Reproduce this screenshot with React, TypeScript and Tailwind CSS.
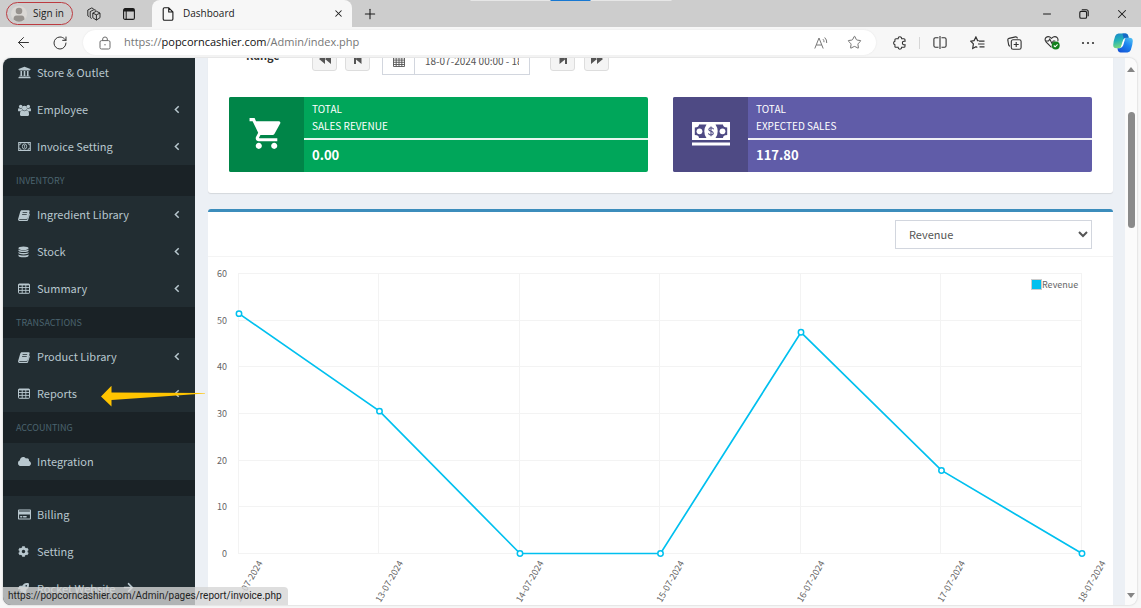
import React, { useState } from "react";
import { FaUniversity, FaCloud, FaRegCreditCard, FaCog, FaRocket, FaArrowRight } from "react-icons/fa";
import { MdShoppingCart } from "react-icons/md";
import { ArrowLeft, RotateCw, Star, X, Plus, Minus } from "lucide-react";

const pageFont = "font-['Noto_Sans_CJK_SC','Noto_Sans',sans-serif]";
const chromeFont = "font-['Open_Sans','Noto_Sans',sans-serif]";

/* ---------- Sidebar glyphs ---------- */

const UsersIcon = () => (
  <svg viewBox="0 0 14 13" className="h-3 w-[13px]" fill="currentColor">
    <circle cx="2.900" cy="2.700" r="1.900" />
    <circle cx="11.100" cy="2.700" r="1.900" />
    <path d="M0 7.600V5.900q0-1.600 1.200-1.300 1.700.8 2.800.1.100 1.200.7 2-1.300.1-2 1.200H1Q0 7.900 0 7.600zM14 7.600V5.900q0-1.600-1.200-1.300-1.700.8-2.800.1-.1 1.200-.7 2 1.300.1 2 1.200H13Q14 7.900 14 7.600z" />
    <circle cx="7" cy="4.500" r="2.700" />
    <path d="M2.100 11.300q0-4.200 2.500-4.400 2.400 1.700 4.800 0 2.500.2 2.500 4.400 0 1.700-1.700 1.700H3.800q-1.700 0-1.700-1.700z" />
  </svg>
);

const MoneyIcon = () => (
  <svg viewBox="0 0 14 10" className="h-[9px] w-[13px]" fill="none" stroke="currentColor">
    <rect x="0.6" y="0.6" width="12.8" height="8.8" strokeWidth="1.2" />
    <ellipse cx="7" cy="5" rx="2.4" ry="2.9" strokeWidth="1" />
    <path d="M6.3 3.9l.8-.4v3" strokeWidth="0.9" />
    <path d="M1 3.2Q3 3 3.2 1M13 3.2Q11 3 10.8 1M1 6.8Q3 7 3.2 9M13 6.8Q11 7 10.8 9" strokeWidth="1" />
  </svg>
);

const BookIcon = () => (
  <svg viewBox="0 0 12 12" className="h-[12px] w-[12px]" fill="currentColor">
    <path fillRule="evenodd" d="M3.9 1.2h6.6c.9 0 1.3.6 1.1 1.4L9.7 9c-.2.6-.7 1-1.4 1H2c-.4 0-.7.1-.8.4 0 .3.3.4.8.4h6.7c.3 0 .6-.2.7-.5l1.8-6.1c.6.3.8.7.6 1.4l-1.7 5.3c-.2.6-.8 1-1.4 1H1.900C.7 12-.1 11 .1 10.100L2.200 2.800C2.500 1.800 3 1.200 3.900 1.200zM4.700 3.300l-.2.7h4.600l.2-.7zM4.200 5.100l-.2.7h4.600l.2-.7z" />
  </svg>
);

const DatabaseIcon = () => (
  <svg viewBox="0 0 12 12" className="h-[12px] w-[11px]" fill="currentColor">
    <ellipse cx="6" cy="1.900" rx="5.500" ry="1.900" />
    <path d="M.5 3.300c1.500 1.400 9.500 1.400 11 0v1.200c0 2-11 2-11 0zM.5 6c1.500 1.400 9.500 1.400 11 0v1.200c0 2-11 2-11 0zM.5 8.700c1.500 1.400 9.500 1.400 11 0v1.400c0 2.300-11 2.300-11 0z" />
  </svg>
);

const TableIcon = () => (
  <svg viewBox="0 0 12 11" className="h-[11px] w-[12px]" fill="none" stroke="currentColor">
    <rect x="0.500" y="1" width="11" height="9.300" rx="0.700" />
    <path d="M.5 1.700h11" strokeWidth="1.400" />
    <path d="M.5 4.500h11M.5 7.400h11M4.200 1.500v8.500M7.800 1.500v8.500" strokeWidth="0.900" />
  </svg>
);

const Caret = () => (
  <svg viewBox="0 0 6 9" className="mt-[2px] ml-auto h-[9px] w-[6px]" fill="none" stroke="currentColor" strokeWidth="1.500">
    <path d="M4.700 1.200L1.400 4.500l3.300 3.300" />
  </svg>
);

type Item = { label: string; icon: React.ReactNode; caret?: boolean; arrow?: boolean };
type Group = { title?: string; items: Item[] };

const groups: Group[] = [
  {
    items: [
      { label: "Store & Outlet", icon: <FaUniversity size={13} /> },
      { label: "Employee", icon: <UsersIcon />, caret: true },
      { label: "Invoice Setting", icon: <MoneyIcon />, caret: true },
    ],
  },
  {
    title: "INVENTORY",
    items: [
      { label: "Ingredient Library", icon: <BookIcon />, caret: true },
      { label: "Stock", icon: <DatabaseIcon />, caret: true },
      { label: "Summary", icon: <TableIcon />, caret: true },
    ],
  },
  {
    title: "TRANSACTIONS",
    items: [
      { label: "Product Library", icon: <BookIcon />, caret: true },
      { label: "Reports", icon: <TableIcon />, caret: true },
    ],
  },
  { title: "ACCOUNTING", items: [{ label: "Integration", icon: <FaCloud size={13} /> }] },
  {
    title: "",
    items: [
      { label: "Billing", icon: <FaRegCreditCard size={13} /> },
      { label: "Setting", icon: <FaCog size={11} /> },
      { label: "Rocket Website", icon: <FaRocket size={11} />, arrow: true },
    ],
  },
];

function Sidebar() {
  return (
    <nav className="relative w-[192px] shrink-0 bg-[#222d32] text-[#b8c7ce]">
      <div className="-mt-1">
        {groups.map((g, i) => (
          <section key={i}>
            {g.title && (
              <h2 className="flex h-[31px] items-center bg-[#1a2226] pl-[13px] text-[9px] text-[#4b646f]">{g.title}</h2>
            )}
            {g.title === "" && <div className="h-4 bg-[#1a2226]" />}
            <ul>
              {g.items.map((it) => (
                <li key={it.label}>
                  <a href="#" className="flex h-[37px] items-center pr-[15px] pb-[2px] pl-[15px] text-[11px] leading-4">
                    <span className="flex w-[19px] items-center pt-[2px]">{it.icon}</span>
                    <span>{it.label}</span>
                    {it.arrow && <FaArrowRight size={11} className="ml-2" />}
                    {it.caret && <Caret />}
                  </a>
                </li>
              ))}
            </ul>
          </section>
        ))}
      </div>
      <svg viewBox="0 0 104 22" className="absolute top-[327px] left-[98px] h-[22px] w-[104px]" fill="#ffc400">
        <path d="M0 11.500L10.500.800v6.700L104 8v.6L10.500 15v6.500z" />
      </svg>
    </nav>
  );
}

/* ---------- Browser frame ---------- */

function TitleBar() {
  return (
    <header className="relative flex h-[27px] shrink-0 items-stretch bg-[#cdcdcd] text-[#1b1b1b]">
      <div className="flex w-[152px] items-center pl-[6px]">
        <button className="flex h-[23px] w-[67px] items-center gap-[6px] rounded-full border border-[#bc3b41] pl-1 text-[10px]">
          <svg viewBox="0 0 16 16" className="h-4 w-4">
            <circle cx="8" cy="8" r="8" fill="#dbd8d5" />
            <circle cx="8" cy="5" r="3.300" fill="#97928e" />
            <path d="M2.500 13.500q0-4 3-4h5q3 0 3 4Q8 18 2.500 13.500z" fill="#97928e" />
          </svg>
          Sign in
        </button>
        <button aria-label="Workspaces" className="ml-[14px]">
          <svg viewBox="0 0 14 14" className="h-[14px] w-[14px]" fill="none" stroke="currentColor" strokeWidth="0.900" strokeLinejoin="round">
            <path d="M9.400 4.200l3.600 1.900v4.600l-3.600 2.400-3.600-2.400V6.100zM5.800 6.100l3.600 1.700L13 6.100M9.400 7.800v5.300" />
            <path d="M4.700 11.500l-1.500-1V4.600L7 2.600l1.900.7" />
            <path d="M2 9.600l-1.200-.8V3L4.600 1l1.900.7" />
          </svg>
        </button>
        <button aria-label="Tab actions" className="ml-[22px]">
          <svg viewBox="0 0 12 12" className="h-3 w-3" fill="none" stroke="currentColor">
            <rect x="0.600" y="0.600" width="10.800" height="10.800" rx="1.500" strokeWidth="1.100" />
            <path d="M1 2.200h10" strokeWidth="2.600" />
            <path d="M3.200 3v8" strokeWidth="1" />
          </svg>
        </button>
      </div>
      <div className="flex w-[200px] items-center rounded-t-lg bg-[#f7f7f7] pr-2 pl-[10px] text-[10px]">
        <svg viewBox="0 0 12 14" className="mr-[9px] h-[14px] w-3" fill="none" stroke="currentColor" strokeWidth="1.100">
          <path d="M1.200 2q0-1.300 1.300-1.300h4.200L10.900 5v7q0 1.300-1.300 1.300H2.500Q1.200 13.300 1.200 12zM6.700.8V5h4.200" />
        </svg>
        <span>Dashboard</span>
        <button aria-label="Close tab" className="ml-auto">
          <X size={11} strokeWidth={2.200} />
        </button>
      </div>
      <button aria-label="New tab" className="ml-[10px]">
        <Plus size={16} strokeWidth={1.600} />
      </button>
      <div className="ml-auto flex items-center gap-[26px] pr-3">
        <button aria-label="Minimize"><Minus size={12} strokeWidth={2} /></button>
        <button aria-label="Restore">
          <svg viewBox="0 0 10 10" className="h-[10px] w-[10px]" fill="none" stroke="currentColor" strokeWidth="1.100">
            <rect x="0.800" y="2.400" width="6.800" height="6.800" rx="1.300" />
            <path d="M2.800.800h4.400q2 0 2 2v4.400" />
          </svg>
        </button>
        <button aria-label="Close"><X size={14} strokeWidth={1.800} /></button>
      </div>
      <div className="absolute top-0 left-1/2 flex h-px w-[201px] -translate-x-1/2 justify-center bg-[#e6e6e6]">
        <span className="w-10 bg-[#1778d2]" />
      </div>
    </header>
  );
}

function Toolbar() {
  return (
    <div className="flex h-[31px] shrink-0 items-center bg-[#f7f7f7] text-[#333]">
      <button aria-label="Back" className="ml-[15px]"><ArrowLeft size={17} strokeWidth={1.400} /></button>
      <button aria-label="Refresh" className="ml-5"><RotateCw size={16} strokeWidth={1.500} /></button>
      <label className="ml-[15px] flex h-[25px] min-w-0 flex-1 items-center rounded-full bg-white pr-[14px] pl-4 text-[#6b6b6b] shadow-[0_0_2px_#e4e4e4]">
        <svg viewBox="0 0 12 14" className="h-[14px] w-3" fill="none" stroke="currentColor" strokeWidth="1">
          <rect x="1" y="4.600" width="10" height="8.400" rx="1.500" />
          <path d="M3.700 4.500V3q0-2 2.300-2t2.300 2v1.500" />
          <circle cx="6" cy="8.800" r="0.700" fill="currentColor" stroke="none" />
        </svg>
        <span className="ml-[13px] text-[11px] text-[#767676]">
          https://<span className="text-[#111]">popcorncashier.com</span>/Admin/index.php
        </span>
        <button aria-label="Read aloud" className="ml-auto">
          <svg viewBox="0 0 15 14" className="h-[14px] w-[15px]" fill="none" stroke="#777" strokeWidth="1">
            <path d="M.8 12.500L5 2l4.200 10.500M2.300 9h5.400M9 3.200q1.200 1.200 1 3M10.700 1.500q2.400 2.400 2 5.500" />
          </svg>
        </button>
        <button aria-label="Add to favorites" className="ml-[18px]"><Star size={15} strokeWidth={1.500} /></button>
      </label>
      <div className="flex items-center pr-2 pl-[17px]">
        <button aria-label="Extensions">
          <svg viewBox="0 0 14 14" className="h-[14px] w-[14px]" fill="none" stroke="currentColor" strokeWidth="1.100">
            <path d="M3 2.700h2.100Q5.100.8 6.900.8t1.800 1.900h2.200q1.100 0 1.100 1.100v1.500q-2.600-.3-2.600 1.700T12 8.700v1.500q0 1.100-1.100 1.100H8.700q0 1.900-1.800 1.900t-1.800-1.900H3q-1.100 0-1.100-1.100V8.700Q.6 8.400.6 7t1.300-1.700V3.800Q1.900 2.700 3 2.700z" />
          </svg>
        </button>
        <span className="ml-[12px] h-3 w-px bg-[#d6d6d6]" />
        <button aria-label="Split screen" className="ml-[13px]">
          <svg viewBox="0 0 14 13" className="h-[13px] w-[14px]" fill="none" stroke="currentColor" strokeWidth="1.100">
            <path d="M5.500 1.700h-3q-1.600 0-1.600 1.500v6.600q0 1.500 1.600 1.500h3M8.500 1.700h3q1.600 0 1.600 1.500v6.600q0 1.500-1.600 1.500h-3M7 0v13" />
          </svg>
        </button>
        <button aria-label="Favorites" className="ml-[23px]">
          <svg viewBox="0 0 15 14" className="h-[14px] w-[15px]" fill="none" stroke="currentColor" strokeWidth="1.200">
            <path d="M8.700 4.700L7.600 4.600 5.900 1 4.100 4.600.8 5.200l2.600 2.700L2.700 12.500 6 10.800l1.300.7M9 5.200h5.500M8 8h6.500M9.500 10.800h5" />
          </svg>
        </button>
        <button aria-label="Collections" className="ml-[22px]">
          <svg viewBox="0 0 15 14" className="h-[14px] w-[15px]" fill="none" stroke="currentColor" strokeWidth="1.100">
            <rect x="4.300" y="3.800" width="9.800" height="9.500" rx="1.800" />
            <path d="M9.200 6v5M6.700 8.500h5M3 10.200Q2 10 1.700 9L.8 4.200Q.6 2.700 2 2.400l6.500-1.500q1.500-.2 2 1.400" />
          </svg>
        </button>
        <button aria-label="Browser essentials" className="ml-[22px]">
          <svg viewBox="0 0 16 15" className="h-[15px] w-4" fill="none" stroke="#333" strokeWidth="1.100">
            <path d="M7.500 12.300L2 6.800Q.2 4.300 2 2.500q2.600-2 5.500.800 3-2.800 5.600-.8 1.500 1.800.6 3.900M1.500 6h3l1.300-2 2 4.200L9.300 6h2" />
            <circle cx="11.700" cy="10.500" r="4" fill="#13801c" stroke="none" />
            <path d="M9.800 10.500l1.300 1.300 2.500-2.500" stroke="#fff" />
          </svg>
        </button>
        <button aria-label="More" className="ml-[21px]">
          <svg viewBox="0 0 14 4" className="h-1 w-[14px]" fill="#333">
            <circle cx="2" cy="2" r="1.100" /><circle cx="7" cy="2" r="1.100" /><circle cx="12" cy="2" r="1.100" />
          </svg>
        </button>
        <button aria-label="Copilot" className="ml-[18px]">
          <svg viewBox="0 0 20 20" className="h-5 w-5">
            <defs>
              <linearGradient id="cpA" x1="0" y1="0" x2="0.300" y2="1">
                <stop offset="0" stopColor="#1b83cc" /><stop offset="0.500" stopColor="#22b2b8" /><stop offset="1" stopColor="#7ddc7c" />
              </linearGradient>
              <linearGradient id="cpB" x1="1" y1="0" x2="0.300" y2="1">
                <stop offset="0" stopColor="#55c6f5" /><stop offset="0.500" stopColor="#1d84ee" /><stop offset="1" stopColor="#1557d8" />
              </linearGradient>
            </defs>
            <path d="M5.500.5h7q2 0 2.600 2l.6 2.300h-3Q11 4.800 10.400 7L8.600 13q-.7 2.300-3 2.300H3.400Q.2 15.300.2 12q.2-4 2-9Q3.200.5 5.500.5z" fill="url(#cpA)" />
            <path d="M14.500 19.500h-7q-2 0-2.600-2l-.5-2.200h2.200q2 0 2.700-2.300l1.900-6q.7-2.200 3-2.200h2.400q3.200 0 3.200 3.300-.2 4-2 9-1 2.400-3.300 2.400z" fill="url(#cpB)" />
            <path d="M9.500.5h3q2 0 2.600 2l.6 2.300h-3Q11.400 4.800 10.800 6z" fill="#1669c7" />
            <path d="M8.400 12.500l1.500-4.800q.5-1.400 1.600-1.400h.5l-1.700 5.600q-.5 1.600-1.500 2.100h-1q.4-.5.6-1.500z" fill="#fff" />
          </svg>
        </button>
      </div>
    </div>
  );
}

/* ---------- Dashboard content ---------- */

const stepButton = "flex h-[25px] w-[25px] items-center justify-center rounded-[3px] border border-[#ddd] bg-[#f4f4f4] text-[#555]";

const StepIcon = ({ d }: { d: string }) => (
  <svg viewBox="0 0 12 10" className="h-[10px] w-3" fill="currentColor"><path d={d} /></svg>
);

function RangeRow() {
  const [range, setRange] = useState("18-07-2024 00:00 - 18-07-2024 23:59");
  return (
    <div className="flex h-[29px] items-start pl-[17px] text-[11px]">
      <label htmlFor="range" className="w-[87px] pl-[21px] leading-[18px] font-bold text-[#333]">Range</label>
      <button aria-label="Previous week" className={stepButton}><StepIcon d="M6 0v10L0 5zM12 0v10L6 5z" /></button>
      <button aria-label="Previous day" className={stepButton + " ml-2"}><StepIcon d="M2 0h2v4.500L9.500 0v10L4 5.500V10H2z" /></button>
      <div className="ml-3 flex h-[29px] border border-[#d2d6de]">
        <span className="flex w-8 items-center justify-center border-r border-[#d2d6de] text-[#555]">
          <svg viewBox="0 0 12 12" className="h-3 w-3" fill="none" stroke="currentColor" strokeWidth="0.900">
            <path d="M.5 2h11v9.500H.5zM.5 5.100h11M.5 7.300h11M.5 9.500h11M3.200 3v8.500M6 3v8.500M8.800 3v8.500" />
            <path d="M0 2.300h12" strokeWidth="1.800" />
          </svg>
        </span>
        <input id="range" value={range} onChange={(e) => setRange(e.target.value)} className="w-[114px] bg-white px-[10px] text-[10px] text-[#555] outline-none" />
      </div>
      <button aria-label="Next day" className={stepButton + " ml-5"}><StepIcon d="M10 0H8v4.500L2.500 0v10L8 5.500V10h2z" /></button>
      <button aria-label="Next week" className={stepButton + " ml-[9px]"}><StepIcon d="M0 0v10l6-5zM6 0v10l6-5z" /></button>
    </div>
  );
}

const CashIcon = () => (
  <svg viewBox="0 0 38 24" className="h-6 w-[38px]">
    <path fill="#fff" d="M0 0h38v18H0zM0 20.500h38V23.500H0z" />
    <path fill="#4e4a84" d="M7 2.500h7.500Q10 9.300 14.500 16H7q0-3-4.200-3V5.500Q7 5.500 7 2.500zM31 2.500h-7.500q4.500 6.800 0 13.500H31q0-3 4.200-3V5.500Q31 5.500 31 2.500z" />
    <circle cx="7.500" cy="9.300" r="2.900" fill="#fff" />
    <circle cx="30.500" cy="9.300" r="2.900" fill="#fff" />
    <path fill="none" stroke="#4e4a84" strokeWidth="1.100" d="M21.600 7.200Q21 5.700 19 5.700t-2.200 1.800Q16.900 8.900 19 9.200t2.300 2q-.1 1.800-2.300 1.800-2.100 0-2.600-1.600M19 4.500v9.700" />
  </svg>
);

function InfoBox({ name, value, color, iconColor, icon }: { name: string; value: string; color: string; iconColor: string; icon: React.ReactNode }) {
  return (
    <article className={"flex h-[75px] flex-1 overflow-hidden rounded-[2px] text-white " + color}>
      <div className={"flex w-[75px] items-center justify-center pb-[2px] " + iconColor}>{icon}</div>
      <div className="flex-1">
        <p className="h-[41px] px-2 pt-[3px] text-[10px] leading-[17px]">TOTAL<br />{name}</p>
        <div className="h-[2px] bg-white/90" />
        <p className="px-2 pt-[5px] text-[13px] leading-5 font-bold">{value}</p>
      </div>
    </article>
  );
}

const data = [
  { day: "12-07-2024", value: 51.4 },
  { day: "13-07-2024", value: 30.5 },
  { day: "14-07-2024", value: 0 },
  { day: "15-07-2024", value: 0 },
  { day: "16-07-2024", value: 47.4 },
  { day: "17-07-2024", value: 17.8 },
  { day: "18-07-2024", value: 0 },
];
const px = (i: number) => 31 + i * 140.5;
const py = (v: number) => 296.5 - (v * 280) / 60;

function RevenueChart() {
  return (
    <svg viewBox="0 0 905 360" className="block h-auto w-full" role="img" aria-label="Revenue per day">
      <g stroke="#f3f3f3" strokeWidth="1">
        {[0, 10, 20, 30, 40, 50, 60].map((t) => (
          <line key={t} x1="31" x2="874" y1={Math.floor(py(t)) + 0.5} y2={Math.floor(py(t)) + 0.5} />
        ))}
        {data.map((d, i) => (
          <line key={d.day} x1={Math.floor(px(i)) - 0.5} x2={Math.floor(px(i)) - 0.5} y1="16" y2="297" />
        ))}
      </g>
      <g fill="#666" fontSize="9">
        {[0, 10, 20, 30, 40, 50, 60].map((t) => (
          <text key={t} x="19" y={py(t) + 3.5} textAnchor="end">{t}</text>
        ))}
        {data.map((d, i) => (
          <text key={d.day} textAnchor="end" transform={`translate(${px(i) + 24} ${306}) rotate(-60)`}>{d.day}</text>
        ))}
        <text x="834" y="31">Revenue</text>
      </g>
      <rect x="823.500" y="22.500" width="10" height="10" fill="#00c0ef" stroke="#ccc" />
      <polyline points={data.map((d, i) => `${px(i)},${py(d.value)}`).join(" ")} fill="none" stroke="#00c0ef" strokeWidth="1.700" />
      {data.map((d, i) => (
        <circle key={d.day} cx={px(i)} cy={py(d.value)} r="2.700" fill="#fff" stroke="#00c0ef" strokeWidth="1.500" />
      ))}
    </svg>
  );
}

function Scrollbar() {
  return (
    <div className="flex w-3 shrink-0 flex-col items-center bg-[#fbfbfb] pt-[9px] pb-[7px]">
      <svg viewBox="0 0 8 5" className="h-[5px] w-2" fill="#858585"><path d="M4 0l4 5H0z" /></svg>
      <div className="mt-10 h-[116px] w-[7px] rounded-full bg-[#8a8a8a]" />
      <svg viewBox="0 0 8 5" className="mt-auto h-[5px] w-2" fill="#858585"><path d="M4 5l4-5H0z" /></svg>
    </div>
  );
}

export default function App() {
  const [metric, setMetric] = useState("Revenue");
  return (
    <div className={"flex h-screen flex-col overflow-hidden bg-[#f7f7f7] " + chromeFont}>
      <TitleBar />
      <Toolbar />
      <div className={"relative mr-1 mb-[3px] ml-[3px] flex min-h-0 flex-1 overflow-hidden rounded-lg bg-[#ecf0f5] shadow-[0_0_2px_#bbb] " + pageFont}>
        <Sidebar />
        <main className="min-w-0 flex-1 pr-3 pl-[13px]">
          <section className="-mt-[12px] rounded-b-[3px] bg-white pb-[21px] shadow-[0_1px_1px_rgba(0,0,0,0.1)]">
            <RangeRow />
            <div className="mt-[22px] flex gap-[25px] px-[21px]">
              <InfoBox name="SALES REVENUE" value="0.00" color="bg-[#00a65a]" iconColor="bg-[#008548]" icon={<MdShoppingCart size={37} />} />
              <InfoBox name="EXPECTED SALES" value="117.80" color="bg-[#605ca8]" iconColor="bg-[#4e4a84]" icon={<CashIcon />} />
            </div>
          </section>
          <section className="mt-4 rounded-[3px] border-t-[3px] border-[#3c8dbc] bg-white">
            <div className="flex h-[45px] items-center justify-end border-b border-[#f4f4f4] px-[21px]">
              <select aria-label="Chart metric" value={metric} onChange={(e) => setMetric(e.target.value)} className="h-[29px] w-[197px] border border-[#d2d6de] bg-white px-[9px] text-[11px] text-[#555]">
                <option>Revenue</option>
                <option>Sales</option>
              </select>
            </div>
            <RevenueChart />
          </section>
        </main>
        <Scrollbar />
        <div className="absolute bottom-0 left-0 h-[18px] rounded-tr-[4px] bg-[#d6d6d6]/80 pr-[6px] pl-[5px] font-['Roboto','Noto_Sans',sans-serif] text-[10px] leading-[18px] text-[#222]">
          https://popcorncashier.com/Admin/pages/report/invoice.php
        </div>
      </div>
    </div>
  );
}
